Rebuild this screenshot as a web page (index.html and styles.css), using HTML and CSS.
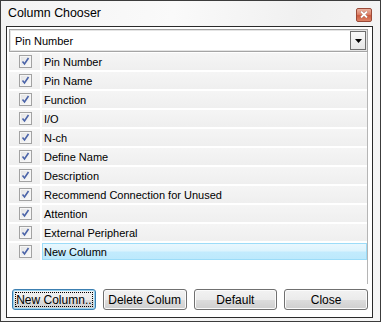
FILE: index.html
```html
<!DOCTYPE html>
<html>
<head>
<meta charset="utf-8">
<link rel="stylesheet" href="styles.css">
</head>
<body>
<div class="window">
  <div class="titlebar">
    <span class="title">Column Chooser</span>
    <span class="close"><svg width="8" height="7" viewBox="0 0 8 7"><path d="M1 0.5 L7 6.5 M7 0.5 L1 6.5" stroke="#ffffff" stroke-width="2"/></svg></span>
  </div>
  <div class="panel">
    <div class="combo">
      <span class="combo-text">Pin Number</span>
      <span class="combo-btn"><svg width="7" height="4" viewBox="0 0 7 4"><path d="M0 0 H7 L3.5 4 Z" fill="#000"/></svg></span>
    </div>
    <div class="list">
      <div class="row"><span class="chk-cell"><span class="chk"><svg width="11" height="11" viewBox="0 0 11 11"><path d="M2.5 5.5 L4.5 8 L8.5 2" fill="none" stroke="#4a63a8" stroke-width="1.6"/></svg></span></span><span class="txt">Pin Number</span></div>
      <div class="row"><span class="chk-cell"><span class="chk"><svg width="11" height="11" viewBox="0 0 11 11"><path d="M2.5 5.5 L4.5 8 L8.5 2" fill="none" stroke="#4a63a8" stroke-width="1.6"/></svg></span></span><span class="txt">Pin Name</span></div>
      <div class="row"><span class="chk-cell"><span class="chk"><svg width="11" height="11" viewBox="0 0 11 11"><path d="M2.5 5.5 L4.5 8 L8.5 2" fill="none" stroke="#4a63a8" stroke-width="1.6"/></svg></span></span><span class="txt">Function</span></div>
      <div class="row"><span class="chk-cell"><span class="chk"><svg width="11" height="11" viewBox="0 0 11 11"><path d="M2.5 5.5 L4.5 8 L8.5 2" fill="none" stroke="#4a63a8" stroke-width="1.6"/></svg></span></span><span class="txt">I/O</span></div>
      <div class="row"><span class="chk-cell"><span class="chk"><svg width="11" height="11" viewBox="0 0 11 11"><path d="M2.5 5.5 L4.5 8 L8.5 2" fill="none" stroke="#4a63a8" stroke-width="1.6"/></svg></span></span><span class="txt">N-ch</span></div>
      <div class="row"><span class="chk-cell"><span class="chk"><svg width="11" height="11" viewBox="0 0 11 11"><path d="M2.5 5.5 L4.5 8 L8.5 2" fill="none" stroke="#4a63a8" stroke-width="1.6"/></svg></span></span><span class="txt">Define Name</span></div>
      <div class="row"><span class="chk-cell"><span class="chk"><svg width="11" height="11" viewBox="0 0 11 11"><path d="M2.5 5.5 L4.5 8 L8.5 2" fill="none" stroke="#4a63a8" stroke-width="1.6"/></svg></span></span><span class="txt">Description</span></div>
      <div class="row"><span class="chk-cell"><span class="chk"><svg width="11" height="11" viewBox="0 0 11 11"><path d="M2.5 5.5 L4.5 8 L8.5 2" fill="none" stroke="#4a63a8" stroke-width="1.6"/></svg></span></span><span class="txt">Recommend Connection for Unused</span></div>
      <div class="row"><span class="chk-cell"><span class="chk"><svg width="11" height="11" viewBox="0 0 11 11"><path d="M2.5 5.5 L4.5 8 L8.5 2" fill="none" stroke="#4a63a8" stroke-width="1.6"/></svg></span></span><span class="txt">Attention</span></div>
      <div class="row"><span class="chk-cell"><span class="chk"><svg width="11" height="11" viewBox="0 0 11 11"><path d="M2.5 5.5 L4.5 8 L8.5 2" fill="none" stroke="#4a63a8" stroke-width="1.6"/></svg></span></span><span class="txt">External Peripheral</span></div>
      <div class="row selected"><span class="chk-cell"><span class="chk"><svg width="11" height="11" viewBox="0 0 11 11"><path d="M2.5 5.5 L4.5 8 L8.5 2" fill="none" stroke="#4a63a8" stroke-width="1.6"/></svg></span></span><span class="txt">New Column</span></div>
    </div>
    <div class="buttons">
      <button class="btn focused"><span class="focus-ring">New Column..</span></button>
      <button class="btn">Delete Colum</button>
      <button class="btn">Default</button>
      <button class="btn">Close</button>
    </div>
  </div>
</div>
</body>
</html>
```

FILE: styles.css
```css
* { box-sizing: border-box; }
html, body { margin: 0; padding: 0; }
body {
  width: 381px;
  height: 322px;
  overflow: hidden;
  background: #ffffff;
  font-family: "Liberation Sans", Arial, sans-serif;
}
.window {
  width: 381px;
  height: 322px;
  border: 1px solid #3c3c3c;
  background: linear-gradient(100deg, #f3f3f3 0%, #fafafa 40%, #f0f0f0 70%, #f6f6f6 100%);
  display: flex;
  flex-direction: column;
}
.titlebar {
  height: 25px;
  display: flex;
  align-items: center;
  padding: 0 8px 0 7px;
  justify-content: space-between;
}
.title {
  font-size: 12.4px;
  color: #000;
  margin-top: -1px;
}
.close {
  width: 16px;
  height: 14px;
  margin-top: 2px;
  border: 1px solid #9a4a38;
  border-radius: 2px;
  background: linear-gradient(#eab2a0 0%, #dc8169 45%, #cc5a3e 55%, #dd8468 100%);
  display: flex;
  align-items: center;
  justify-content: center;
}
.close svg { filter: drop-shadow(0 0 0.5px #5a1a10); }
.panel {
  margin-left: 5px;
  width: 367px;
  height: 292px;
  border: 1px solid #2a2a2a;
  background: #ffffff;
  padding: 2px 4px 0 1px;
  display: flex;
  flex-direction: column;
}
.combo {
  margin-left: 1px;
  height: 23px;
  border: 1px solid #a5a5a5;
  box-shadow: inset 0 0 0 1px #e4e4e4;
  display: flex;
  align-items: center;
  justify-content: space-between;
  padding: 0 1px 0 5px;
}
.combo-text {
  font-size: 11px;
  color: #000;
}
.combo-btn {
  width: 16px;
  height: 19px;
  border: 1px solid #6f6f6f;
  background: linear-gradient(#fafafa, #e6e6e6);
  display: flex;
  align-items: center;
  justify-content: center;
}
.list {
  margin-left: 1px;
  height: 232px;
  border-right: 1px solid #b5b5b5;
  display: flex;
  flex-direction: column;
}
.row {
  height: 19px;
  display: flex;
  gap: 2px;
  border-top: 1px solid #ffffff;
  border-bottom: 1px solid #ffffff;
}
.chk-cell {
  width: 31px;
  background: linear-gradient(#f5f5f5, #efefef);
  display: flex;
  align-items: center;
  padding-left: 10px;
}
.chk {
  width: 13px;
  height: 13px;
  border: 1px solid #a2a2a2;
  background: linear-gradient(135deg, #e2e2e2, #fbfbfb);
  box-shadow: inset 0 0 0 1px #f6f6f6;
  display: flex;
  align-items: center;
  justify-content: center;
}
.txt {
  flex: 1;
  background: linear-gradient(#f5f5f5, #efefef);
  font-size: 11px;
  color: #000;
  display: flex;
  align-items: center;
  padding-left: 2px;
}
.row.selected .txt {
  background: linear-gradient(#e8f7fe 0%, #dcf3fd 45%, #c2ebfd 55%, #bde9fc 100%);
  border: 1px solid #9cdcf8;
  padding-left: 1px;
}
.buttons {
  margin-top: 5px;
  padding-left: 4px;
  display: grid;
  grid-template-columns: repeat(4, 1fr);
  gap: 7px;
}
.btn {
  height: 21px;
  border: 1px solid #707070;
  border-radius: 3px;
  background: linear-gradient(#f2f2f2 0%, #ebebeb 50%, #dddddd 51%, #cfcfcf 100%);
  box-shadow: inset 0 0 0 1px #fbfbfb;
  font-family: "Liberation Sans", Arial, sans-serif;
  font-size: 12px;
  color: #000;
  padding: 0;
  display: flex;
  align-items: center;
  justify-content: center;
}
.btn.focused {
  border-color: #3c7fb1;
  box-shadow: inset 0 0 0 1px #97d3f1;
  padding: 2px;
}
.focus-ring {
  width: 100%;
  height: 100%;
  border: 1px dotted #000;
  display: flex;
  align-items: center;
  justify-content: center;
}
```
